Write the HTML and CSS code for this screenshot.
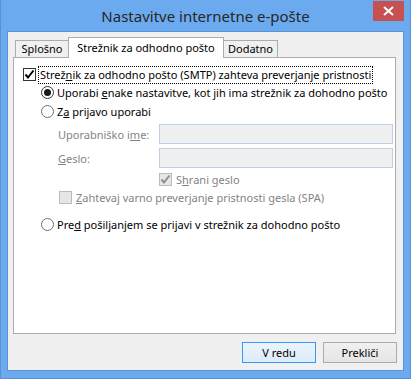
FILE: index.html
```html
<!DOCTYPE html>
<html lang="sl">
<head>
    <meta charset="UTF-8">
    <title>Nastavitve internetne e-pošte</title>
    <link rel="stylesheet" href="styles.css">
</head>
<body>
    <div class="window">
        <div class="titlebar">
            <span class="title">Nastavitve internetne e-pošte</span>
            <div class="close">
                <svg width="11" height="10" viewBox="0 0 11 10">
                    <path d="M1 1 L10 9 M10 1 L1 9" stroke="#fff" stroke-width="2"/>
                </svg>
            </div>
        </div>
        <div class="client">
            <div class="tabs">
                <div class="tab first">Splošno</div>
                <div class="tab active">Strežnik za odhodno pošto</div>
                <div class="tab last">Dodatno</div>
            </div>
            <div class="panel">
                <div class="row r1">
                    <span class="check">
                        <svg width="11" height="11" viewBox="0 0 11 11"><path d="M1.5 5.5 L4 8.5 L9.5 1.5" stroke="#000" stroke-width="2" fill="none"/></svg>
                    </span>
                    <span class="focus">Strež<u>n</u>ik za odhodno pošto (SMTP) zahteva preverjanje pristnosti</span>
                </div>
                <div class="row r2 indent">
                    <span class="radio on"></span>
                    <span>Uporabi <u>e</u>nake nastavitve, kot jih ima strežnik za dohodno pošto</span>
                </div>
                <div class="row r3 indent">
                    <span class="radio"></span>
                    <span>Z<u>a</u> prijavo uporabi</span>
                </div>
                <div class="row field r4">
                    <span class="lbl">Uporabniško i<u>m</u>e:</span>
                    <span class="input"></span>
                </div>
                <div class="row field r5">
                    <span class="lbl"><u>G</u>eslo:</span>
                    <span class="input"></span>
                </div>
                <div class="row r6 disabled">
                    <span class="check off">
                        <svg width="11" height="11" viewBox="0 0 11 11"><path d="M1.5 5.5 L4 8.5 L9.5 1.5" stroke="#8f8f8f" stroke-width="2" fill="none"/></svg>
                    </span>
                    <span>S<u>h</u>rani geslo</span>
                </div>
                <div class="row r7 disabled">
                    <span class="check off"></span>
                    <span><u>Z</u>ahtevaj varno preverjanje pristnosti gesla (SPA)</span>
                </div>
                <div class="row r8 indent">
                    <span class="radio"></span>
                    <span>Pre<u>d</u> pošiljanjem se prijavi v strežnik za dohodno pošto</span>
                </div>
            </div>
            <div class="buttons">
                <div class="btn default">V redu</div>
                <div class="btn">Prekliči</div>
            </div>
        </div>
    </div>
</body>
</html>
```

FILE: styles.css
```css
body {
    margin: 0;
    font-family: "Noto Sans", sans-serif;
    font-size: 11px;
    color: #000;
}
u {
    text-underline-offset: 1px;
}
.window {
    width: 411px;
    height: 379px;
    box-sizing: border-box;
    background: #6caaf0;
    border: 1px solid #5a91d6;
    border-top: none;
    display: flex;
    flex-direction: column;
}
.titlebar {
    height: 31px;
    display: flex;
    justify-content: center;
    align-items: center;
    position: relative;
}
.title {
    font-size: 15px;
    color: #262626;
    margin-top: 1px;
}
.close {
    position: absolute;
    right: 6px;
    top: 1px;
    width: 31px;
    height: 20px;
    background: #c75050;
    display: flex;
    justify-content: center;
    align-items: center;
}
.client {
    margin: 0 6px 7px 6px;
    flex: 1;
    background: #f0f0f0;
    border: 1px solid #5b93d8;
    display: flex;
    flex-direction: column;
}
.tabs {
    display: flex;
    align-items: flex-end;
    margin: 5px 0 0 7px;
    height: 20px;
    position: relative;
    z-index: 1;
}
.tab {
    height: 17px;
    box-sizing: border-box;
    border: 1px solid #acacac;
    border-bottom: none;
    background: #f0f0f0;
    line-height: 16px;
    text-align: center;
    white-space: nowrap;
}
.tab.first {
    width: 54px;
}
.tab.last {
    width: 55px;
    margin-left: -1px;
}
.tab.active {
    height: 21px;
    background: #fff;
    margin: 0 0 -1px -1px;
    line-height: 19px;
    width: 156px;
}
.panel {
    margin: 0 7px 0 5px;
    height: 277px;
    box-sizing: border-box;
    background: #fff;
    border: 1px solid #acacac;
    padding: 8px 1px 0 9px;
    display: flex;
    flex-direction: column;
}
.row {
    display: flex;
    align-items: center;
    height: 18px;
    white-space: nowrap;
}
.r1 {
    height: 17px;
}
.indent {
    padding-left: 18px;
}
.r3 {
    height: 21px;
}
.field {
    margin-top: 2px;
    height: 20px;
    padding-left: 35px;
}
.r5 {
    margin-top: 4px;
}
.r6 {
    margin-top: 2px;
    padding-left: 136px;
}
.r7 {
    padding-left: 36px;
}
.r8 {
    margin-top: 9px;
}
.lbl {
    width: 101px;
    flex-shrink: 0;
    color: #838383;
}
.input {
    flex: 1;
    height: 20px;
    box-sizing: border-box;
    background: #f0f0f0;
    border: 1px solid #bccfe4;
    margin-right: 1px;
}
.disabled {
    color: #838383;
}
.check {
    flex-shrink: 0;
    width: 13px;
    height: 13px;
    box-sizing: border-box;
    border: 1px solid #333;
    background: #fff;
    margin-right: 3px;
    display: flex;
}
.check.off {
    border-color: #bcbcbc;
    background: #e6e6e6;
    margin-right: 4px;
}
.radio {
    flex-shrink: 0;
    width: 13px;
    height: 13px;
    box-sizing: border-box;
    border: 1px solid #707070;
    border-radius: 50%;
    background: #fff;
    margin-right: 3px;
    position: relative;
}
.radio.on {
    border-color: #333;
}
.radio.on::after {
    content: "";
    position: absolute;
    left: 2px;
    top: 2px;
    width: 7px;
    height: 7px;
    border-radius: 50%;
    background: #1a1a1a;
}
.focus {
    outline: 1px dotted #000;
    padding: 0 1px;
    line-height: 16px;
}
.buttons {
    display: flex;
    justify-content: flex-end;
    margin: 8px 6px 0 0;
    gap: 7px;
}
.btn {
    width: 74px;
    height: 21px;
    box-sizing: border-box;
    border: 1px solid #acacac;
    background: linear-gradient(#f0f0f0, #e5e5e5);
    display: flex;
    justify-content: center;
    align-items: center;
}
.btn.default {
    border-color: #3399ff;
    background: linear-gradient(#ecf4fc, #dcecfc);
}
```
